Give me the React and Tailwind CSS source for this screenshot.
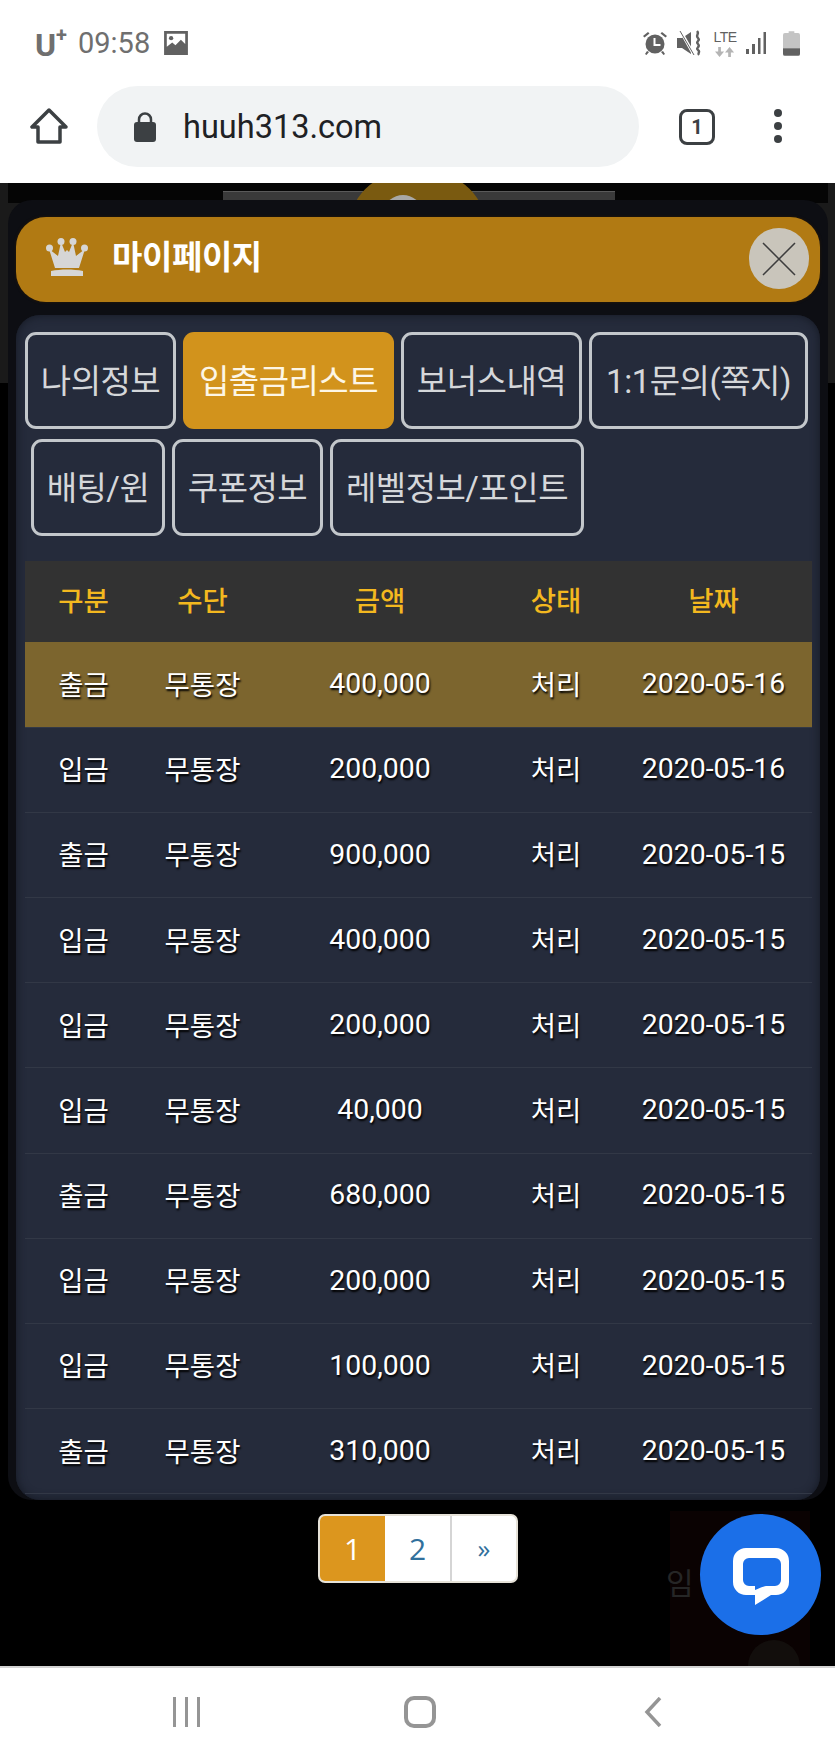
const tabsTop = [
    { label: "나의정보", width: "w-[151px]" },
    { label: "입출금리스트", width: "w-[211px]", active: true },
    { label: "보너스내역", width: "w-[181px]" },
    { label: "1:1문의(쪽지)", width: "w-[219px]" },
];

const tabsBottom = [
    { label: "배팅/윈", width: "w-[134px]" },
    { label: "쿠폰정보", width: "w-[151px]" },
    { label: "레벨정보/포인트", width: "w-[254px]" },
];

const rows = [
    ["출금", "400,000", "2020-05-16"],
    ["입금", "200,000", "2020-05-16"],
    ["출금", "900,000", "2020-05-15"],
    ["입금", "400,000", "2020-05-15"],
    ["입금", "200,000", "2020-05-15"],
    ["입금", "40,000", "2020-05-15"],
    ["출금", "680,000", "2020-05-15"],
    ["입금", "200,000", "2020-05-15"],
    ["입금", "100,000", "2020-05-15"],
    ["출금", "310,000", "2020-05-15"],
];

const Tab = ({ label, width, active }) => (
    <button
        className={`h-[97px] rounded-[11px] text-[33px] tracking-[-0.5px] text-center pt-[2px] ${width} ${active
            ? "bg-[#d2931c] text-[#fdf6e6]"
            : "border-[3px] border-[#c3c7cb] bg-[#252b3b] text-[#d5d7da]"
            }`}
    >
        {label}
    </button>
);

const StatusBar = () => (
    <div className="h-[86px] px-[35px] flex items-center justify-between text-[#6f6f6f]">
        <div className="flex items-center">
            <span className="font-bold text-[32px] leading-none mt-[3px]">U</span>
            <span className="font-bold text-[20px] leading-none mb-[16px]">+</span>
            <span className="text-[29px] leading-none ml-[11px]">09:58</span>
            <svg viewBox="0 0 24 24" className="w-[26px] h-[26px] ml-[13px]" fill="#616161">
                <path d="M1 1h22v22H1zM3.5 3.5v12l5-4 3 2.5 5-5 4 4v-9.5z" fillRule="evenodd" />
                <circle cx="7.5" cy="7.5" r="2" />
            </svg>
        </div>
        <div className="flex items-center">
            {/* alarm */}
            <svg viewBox="0 0 26 26" className="w-[26px] h-[26px]" fill="#616161">
                <circle cx="13" cy="14" r="9.5" />
                <path d="M1 6l5-4 1.5 1.5-5 4zM25 6l-5-4-1.5 1.5 5 4zM5 21l-2 3 1.5 1 2.500-3zM21 21l2 3-1.5 1-2.500-3z" />
                <path d="M12.5 8v7h6" fill="none" stroke="#fff" strokeWidth="2" />
            </svg>
            {/* vibrate / mute */}
            <svg viewBox="0 0 25 26" className="w-[25px] h-[26px] ml-[9px]" fill="#616161">
                <path d="M0 8h5l9-6v22l-9-6H0z" />
                <path d="M3 0l14 25" stroke="#fff" strokeWidth="3" />
                <path d="M3 1l14 24" stroke="#616161" strokeWidth="1" />
                <path d="M20 1c3 3-2 4 1 7s-3 3 0 6-3 4 0 6-1 3 1 5" fill="none" stroke="#616161" strokeWidth="2.4" />
            </svg>
            <div className="w-[24px] ml-[11px] flex flex-col items-center font-['Liberation_Sans',sans-serif]">
                <span className="text-[14px] leading-[15px] text-[#616161] tracking-[-0.5px]">LTE</span>
                <svg viewBox="0 0 22 11" className="w-[20px] h-[10px] mt-[2px]" fill="#b5b5b5">
                    <path d="M5 11L0 5h3.5V0h3v5H10zM16 0l5 6h-3.5v5h-3V6H11z" />
                </svg>
            </div>
            <svg viewBox="0 0 22 24" className="w-[22px] h-[24px] ml-[8px]" fill="#616161">
                <rect x="1" y="18" width="3" height="5" />
                <rect x="7" y="13" width="3" height="10" />
                <rect x="13" y="7" width="2.5" height="16" />
                <rect x="18.5" y="1" width="2.5" height="22" />
            </svg>
            <svg viewBox="0 0 18 26" className="w-[17px] h-[25px] ml-[16px]">
                <path d="M6 0h6v2h4a2 2 0 0 1 2 2v14H0V4a2 2 0 0 1 2-2h4z" fill="#c4c4c4" />
                <path d="M0 18h18v6a2 2 0 0 1-2 2H2a2 2 0 0 1-2-2z" fill="#616161" />
            </svg>
        </div>
    </div>
);

const Toolbar = () => (
    <div className="h-[97px] flex items-start">
        <svg viewBox="0 0 38 38" className="w-[38px] h-[38px] ml-[30px] mt-[21px]" fill="none" stroke="#3c4043" strokeWidth="3.5" strokeLinejoin="round">
            <path d="M19 3L2 20h6v15h22V20h6z" />
        </svg>
        <div className="w-[542px] h-[81px] ml-[29px] rounded-full bg-[#f1f3f4] flex items-center pl-[37px]">
            <svg viewBox="0 0 22 30" className="w-[22px] h-[30px]" fill="#3c4043">
                <rect x="0" y="10" width="22" height="20" rx="3" />
                <path d="M5 11V7.5a6 6 0 0 1 12 0V11" fill="none" stroke="#3c4043" strokeWidth="2.5" />
            </svg>
            <span className="ml-[27px] text-[32.5px] text-[#202124] leading-none mt-[2px]">huuh313.com</span>
        </div>
        <div className="w-[36px] h-[36px] ml-[40px] mt-[23px] rounded-[8px] border-[3.5px] border-[#3c4043] flex items-center justify-center font-bold text-[20px] text-[#3c4043]">
            1
        </div>
        <div className="ml-[59px] mt-[23px] flex flex-col gap-[5px]">
            <span className="w-[8px] h-[8px] rounded-full bg-[#3c4043]" />
            <span className="w-[8px] h-[8px] rounded-full bg-[#3c4043]" />
            <span className="w-[8px] h-[8px] rounded-full bg-[#3c4043]" />
        </div>
    </div>
);

const ModalHeader = () => (
    <div className="h-[85px] mx-[8px] rounded-[30px] bg-[#b17a13] shadow-[0_0_3px_#2b1a05] flex items-center relative">
        <svg viewBox="0 0 42 38" className="w-[42px] h-[38px] ml-[30px] mb-[5px]" fill="#d6d6d6">
            <circle cx="3.5" cy="10" r="3.5" />
            <circle cx="15" cy="3.5" r="3.5" />
            <circle cx="27" cy="3.5" r="3.5" />
            <circle cx="38.5" cy="10" r="3.5" />
            <path d="M3 11l9 7 3-14 4 10 2-2 2 2 4-10 3 14 9-7-6 19H9z" />
            <path d="M5 33c10-2 22-2 32 0v5H5z" />
        </svg>
        <span className="ml-[24px] mb-[3px] text-[33px] font-bold text-white tracking-[-0.4px]">마이페이지</span>
        <button className="absolute left-[733px] top-[11px] w-[60px] h-[61px] rounded-full bg-[#c9c5bb] flex items-center justify-center">
            <svg viewBox="0 0 34 34" className="w-[34px] h-[34px]" stroke="#3d3d3d" strokeWidth="1.5">
                <path d="M1 1l32 32M33 1L1 33" />
            </svg>
        </button>
    </div>
);

const HistoryTable = () => (
    <table className="w-[787px] table-fixed mt-[25px] ml-[9px] border-collapse text-center">
        <colgroup>
            <col className="w-[117px]" />
            <col className="w-[121px]" />
            <col className="w-[234px]" />
            <col className="w-[118px]" />
            <col className="w-[197px]" />
        </colgroup>
        <thead>
            <tr className="h-[81px] bg-[#323232] text-[#f3b81f] text-[27.5px]">
                <th className="font-medium">구분</th>
                <th className="font-medium">수단</th>
                <th className="font-medium">금액</th>
                <th className="font-medium">상태</th>
                <th className="font-medium">날짜</th>
            </tr>
        </thead>
        <tbody className="text-[27.5px] text-white [text-shadow:1px_2px_2px_#000]">
            {rows.map((value, index) => (
                <tr
                    key={index}
                    className={`h-[85.2px] border-b border-[#323846] ${index === 0 ? "bg-[#7c652e]" : ""}`}
                >
                    <td className="pt-[2px]">{value[0]}</td>
                    <td className="pt-[2px]">무통장</td>
                    <td className="text-[28.4px]">{value[1]}</td>
                    <td className="pt-[2px]">처리</td>
                    <td className="text-[28.4px]">{value[2]}</td>
                </tr>
            ))}
        </tbody>
    </table>
);

const Pagination = () => (
    <div className="w-[200px] h-[69px] mr-[317px] rounded-[7px] border-[2px] border-[#e6e2d8] bg-white flex overflow-hidden font-['Open_Sans',sans-serif]">
        <span className="w-[65px] bg-[#dc961e] text-[#fff] text-[30px] flex items-center justify-center">1</span>
        <span className="w-[67px] border-r-[2px] border-[#d5d5d5] text-[#31709c] text-[30px] flex items-center justify-center">2</span>
        <span className="flex-1 text-[#31709c] text-[26px] flex items-center justify-center">»</span>
    </div>
);

export default function App() {
    return (
        <div className="w-[835px] h-[1763px] bg-white flex flex-col overflow-hidden font-['Roboto','Noto_Sans_CJK_KR',sans-serif]">
            <StatusBar />
            <Toolbar />

            <div className="h-[1483px] bg-black relative overflow-hidden">
                {/* page behind the modal */}
                <div className="absolute left-0 top-0 w-[835px] h-[200px] bg-[#1a1a1a]" />
                <div className="absolute left-[8px] top-0 w-[820px] h-[20px] bg-[#050505]" />
                <div className="absolute left-[223px] top-[8px] w-[392px] h-[12px] bg-[#3a3a3a] border-t border-[#5a5a5a]" />
                <div className="absolute left-[350px] top-[-14px] w-[135px] h-[110px] rounded-[50%] bg-[#7a5a10]" />
                <div className="absolute left-[385px] top-[12px] w-[36px] h-[30px] rounded-[50%] bg-[#a8a8a8]" />
                <div className="absolute left-[670px] top-[1328px] w-[140px] h-[155px] bg-[#0a0202]">
                    <span className="absolute left-[-4px] top-[50px] text-[30px] text-[#262626]">임</span>
                    <div className="absolute left-[78px] bottom-0 w-[52px] h-[26px] rounded-t-full bg-[#120e0c]" />
                </div>

                <div className="absolute left-[8px] top-[17px] w-[820px] h-[1300px] rounded-[24px] bg-[#0d0e13] pt-[17px]">
                    <ModalHeader />
                    <div className="h-[1185px] mt-[13px] mx-[8px] rounded-[24px] bg-[#252b3b] shadow-[inset_0_0_10px_#141822] pt-[17px]">
                        <div className="flex gap-[7px] ml-[9px]">
                            {tabsTop.map((value) => (
                                <Tab key={value.label} {...value} />
                            ))}
                        </div>
                        <div className="flex gap-[7px] ml-[15px] mt-[10px]">
                            {tabsBottom.map((value) => (
                                <Tab key={value.label} {...value} />
                            ))}
                        </div>
                        <HistoryTable />
                    </div>
                </div>

                <div className="absolute left-0 right-0 top-[1331px] flex justify-end">
                    <Pagination />
                </div>

                <button className="absolute left-[700px] top-[1331px] w-[121px] h-[121px] rounded-full bg-[#1b6fe8] flex items-center justify-center">
                    <svg viewBox="0 0 56 57" className="w-[56px] h-[57px] mt-[4px]">
                        <path
                            d="M13 0h30a13 13 0 0 1 13 13v21a13 13 0 0 1-13 13H38L22 57V47h-9A13 13 0 0 1 0 34V13A13 13 0 0 1 13 0z"
                            fill="#fff"
                        />
                        <path
                            d="M14 10h28a6 6 0 0 1 6 6v16a6 6 0 0 1-6 6h-9c-4 1-8 3-11 4v-4h-6a6 6 0 0 1-6-6V16a6 6 0 0 1 6-6z"
                            fill="#1b6fe8"
                        />
                    </svg>
                </button>
            </div>

            {/* android nav bar */}
            <div className="flex-1 border-t-[2px] border-[#d3d3d3] bg-white">
                <div className="flex items-center h-full pb-[8px]">
                    <div className="ml-[173px] flex gap-[9px]">
                        <span className="w-[3px] h-[30px] bg-[#959595]" />
                        <span className="w-[3px] h-[30px] bg-[#959595]" />
                        <span className="w-[3px] h-[30px] bg-[#959595]" />
                    </div>
                    <span className="ml-[204px] w-[32px] h-[32px] rounded-[10px] border-[4px] border-[#959595]" />
                    <svg viewBox="0 0 18 30" className="ml-[208px] w-[18px] h-[30px]" fill="none" stroke="#959595" strokeWidth="3.5">
                        <path d="M16 1L3 15l13 14" />
                    </svg>
                </div>
            </div>
        </div>
    );
}
